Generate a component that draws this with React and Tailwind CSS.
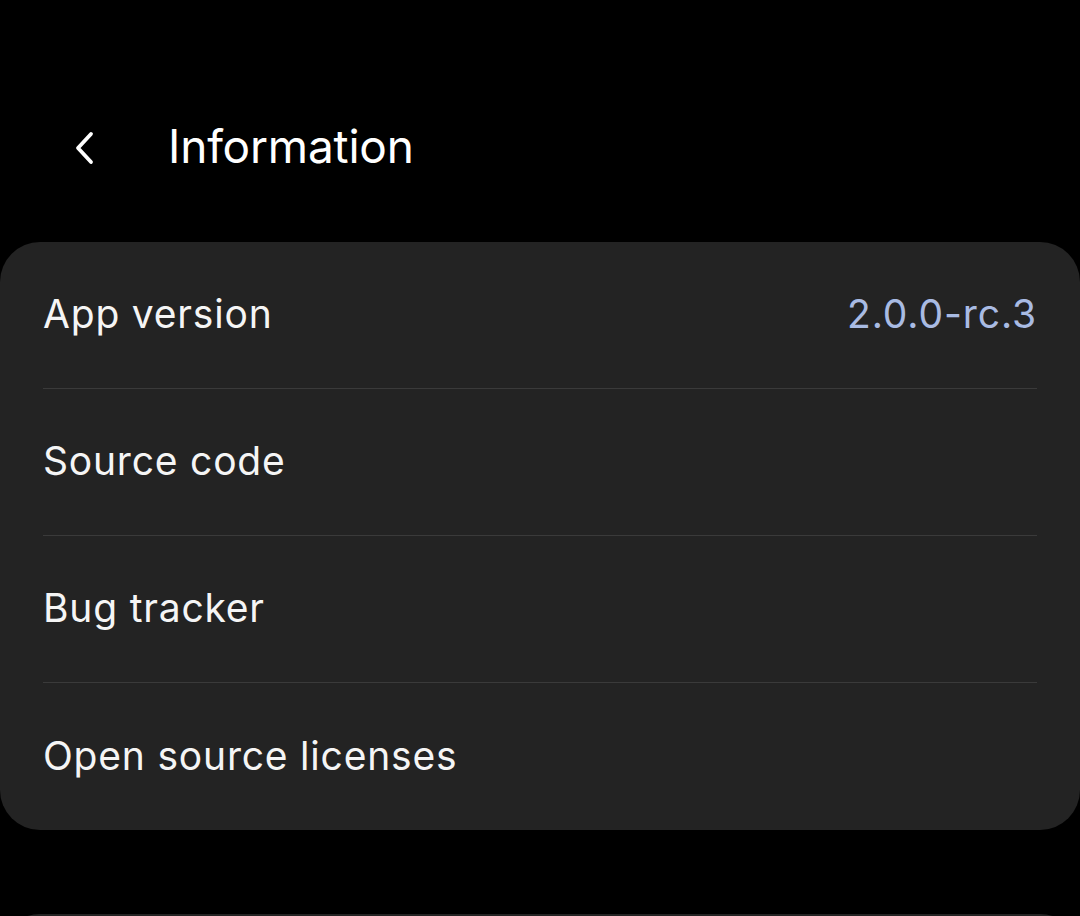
const rows = [
  { label: "App version", value: "2.0.0-rc.3" },
  { label: "Source code" },
  { label: "Bug tracker" },
  { label: "Open source licenses" },
];

// Back arrow drawn as a simple chevron
const BackChevron = () => (
  <svg width="24" height="34" viewBox="0 0 24 34" fill="none">
    <polyline
      points="18,3 5,17 18,31"
      stroke="white"
      strokeWidth="3.8"
      strokeLinecap="round"
      strokeLinejoin="round"
    />
  </svg>
);

const App = () => {
  return (
    <div className="min-h-screen w-[1080px] h-[916px] overflow-hidden bg-black text-white font-['Inter',sans-serif]">
      <header className="h-[242px] flex items-start pt-[116px]">
        <button className="w-[60px] h-[60px] ml-[55px] mt-[2px] flex items-center justify-center">
          <BackChevron />
        </button>
        <h1 className="ml-[53px] text-[46px] leading-[60px] font-normal tracking-[-0.2px]">
          Information
        </h1>
      </header>

      <div className="bg-[#232323] rounded-[40px] px-[43px]">
        {rows.map((row, i) => (
          <div
            key={row.label}
            className={`h-[147px] pb-[1px] flex items-center justify-between ${
              i < rows.length - 1 ? "border-b border-[#3a3a3a]" : ""
            }`}
          >
            <span className="text-[39px] text-[#f5f5f5] tracking-[0.8px]">
              {row.label}
            </span>
            {row.value && (
              <span className="text-[39px] text-[#a9bbe3] tracking-[0.9px]">
                {row.value}
              </span>
            )}
          </div>
        ))}
      </div>

      <div className="mt-[84px] h-[100px] bg-[#232323] rounded-[40px]" />
    </div>
  );
};

export default App;
